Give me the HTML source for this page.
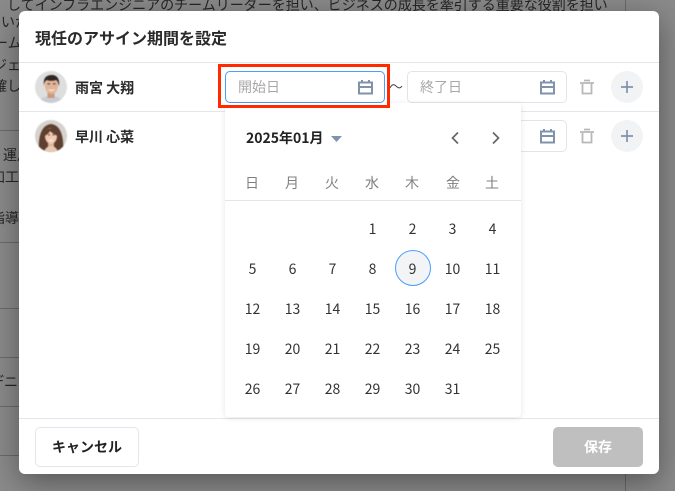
<!DOCTYPE html>
<html lang="ja"><head><meta charset="utf-8">
<style>
*{box-sizing:border-box;margin:0;padding:0}
html,body{width:675px;height:491px;overflow:hidden}
body{position:relative;background:#8a8a8a;font-family:"Noto Sans CJK JP","Liberation Sans",sans-serif;color:#222}
.a{position:absolute;white-space:nowrap;line-height:20px}
.bg{color:#262626;font-size:14px}
.ln{position:absolute;height:1px;background:#6a6a6a}
.modal{position:absolute;left:19px;top:11px;width:640px;height:463px;background:#fff;border-radius:6px;box-shadow:0 8px 30px rgba(0,0,0,.38)}
.h{position:absolute;left:19px;width:640px;height:1px;background:#e3e7ec}
.inp{position:absolute;width:160px;height:32px;background:#fff;border:1px solid #e1e5ea;border-radius:5px}
.ph{color:#a8a8a8;font-size:14px}
.nm{font-size:14px;font-weight:700;color:#2a2a2a}
.plus{position:absolute;left:611px;width:32px;height:32px;border-radius:50%;background:#f2f3f5}
.av{position:absolute;left:35px;width:32px;height:32px;filter:blur(.4px)}
.ic{position:absolute}
.pop{position:absolute;left:225px;top:103px;width:296px;height:314px;background:#fff;border-radius:0 0 4px 4px;box-shadow:0 1px 6px rgba(0,0,0,.1)}
.d{position:absolute;width:40px;text-align:center;font-size:14px;line-height:20px;color:#333}
.w{color:#808080}
</style></head><body>
<div class="a bg" style="left:7px;top:-5px">してインフラエンジニアのチームリーダーを担い、ビジネスの成長を牽引する重要な役割を担い</div>
<div class="a bg" style="left:1px;top:12px">いか</div>
<div class="a bg" style="left:-6px;top:33px">ーム</div>
<div class="a bg" style="left:-7px;top:55px">ジェ</div>
<div class="a bg" style="left:-7px;top:76px">確し</div>
<div class="a bg" style="left:3px;top:145px">運用</div>
<div class="a bg" style="left:-9px;top:167px">加工</div>
<div class="a bg" style="left:-9px;top:208px">指導</div>
<div class="a bg" style="left:-10px;top:372px">デニ</div>
<div class="ln" style="left:0;top:130px;width:19px"></div>
<div class="ln" style="left:0;top:242px;width:19px"></div>
<div class="ln" style="left:0;top:308px;width:19px"></div>
<div class="ln" style="left:0;top:357px;width:19px"></div>
<div class="ln" style="left:0;top:406px;width:19px"></div>
<div class="ln" style="left:0;top:455px;width:19px"></div>
<div style="position:absolute;left:625px;top:0;width:1px;height:491px;background:#6a6a6a"></div>

<div class="modal"></div>
<div class="a" style="left:35px;top:26px;font-size:16px;font-weight:700;line-height:22px;color:#2a2a2a">現任のアサイン期間を設定</div>
<div class="h" style="top:62px"></div>
<div class="h" style="top:111px"></div>
<div class="h" style="top:418px"></div>

<svg class="av" style="top:71px" viewBox="0 0 32 32"><defs><clipPath id="c1"><circle cx="16" cy="16" r="16"/></clipPath></defs><g clip-path="url(#c1)"><rect width="32" height="32" fill="#dedede"/><path d="M4 32c1-5 6-7 12-7s11 2 12 7z" fill="#c9ccd2"/><rect x="12.500" y="20" width="7" height="7" fill="#c99a80"/><ellipse cx="16.500" cy="14.500" rx="6.500" ry="8.500" fill="#e3b397"/><path d="M9 15C8 7 11 4 17 4c5 0 8 4 7 11-1-3-1-5-3-6-3 1-7 1-9 0-2 1-3 3-3 6z" fill="#2e2723"/><path d="M12.500 12.800h2.500M18 12.800h2.500" stroke="#2e2723" stroke-width=".9"/><path d="M12.500 18q4 2 8 0q-4 4-8 0z" fill="#fff"/></g></svg>
<svg class="av" style="top:120px" viewBox="0 0 32 32"><defs><clipPath id="c2"><circle cx="16" cy="16" r="16"/></clipPath></defs><g clip-path="url(#c2)"><rect width="32" height="32" fill="#d6d2ce"/><path d="M4 32C3 20 5 5 16 4c11 1 13 16 12 28z" fill="#5e4030"/><rect x="13" y="21" width="6" height="7" fill="#dcb098"/><path d="M9 32c1-4 4-6 7-6s6 2 7 6z" fill="#e8c8b4"/><ellipse cx="16" cy="16" rx="6" ry="8" fill="#f0c9b2"/><path d="M9 16c0-5 4-8 9-8 3 1 5 4 5 8-3-1-6-3-8-5-1 2-3 4-6 5z" fill="#5e4030"/><path d="M13 14.800h2M17.500 14.800h2" stroke="#3a2a22" stroke-width=".9"/><path d="M13 19.500q3 1.500 6 0q-3 3.500-6 0z" fill="#fff"/></g></svg>
<div class="a nm" style="left:75px;top:78px">雨宮 大翔</div>
<div class="a nm" style="left:75px;top:127px">早川 心菜</div>

<div class="inp" style="left:225px;top:71px;border-color:#4a9eff"></div>
<div class="a ph" style="left:238px;top:77px">開始日</div>
<svg class="ic" style="left:358px;top:79px" width="15" height="16" viewBox="0 0 15 16"><path d="M1 3.500h13v11H1zM1 8h13" fill="none" stroke="#7f93ad" stroke-width="2"/><path d="M4 1v3M11 1v3" stroke="#7f93ad" stroke-width="2"/></svg>
<svg class="ic" style="left:389px;top:83px" width="14" height="8" viewBox="0 0 14 8"><path d="M1 5C3 1 5 1 7 3s4 3 6 0" fill="none" stroke="#444" stroke-width="1"/></svg>
<div class="inp" style="left:407px;top:71px"></div>
<div class="a ph" style="left:420px;top:77px">終了日</div>
<svg class="ic" style="left:540px;top:79px" width="15" height="16" viewBox="0 0 15 16"><path d="M1 3.500h13v11H1zM1 8h13" fill="none" stroke="#7f93ad" stroke-width="2"/><path d="M4 1v3M11 1v3" stroke="#7f93ad" stroke-width="2"/></svg>
<svg class="ic" style="left:580px;top:79px" width="14" height="16" viewBox="0 0 14 16"><path d="M0 4h14M4 1.500h6M2.500 5v9.500h9V5" fill="none" stroke="#b8b8b8" stroke-width="1.800"/></svg>
<div class="plus" style="top:71px"></div>
<svg class="ic" style="left:620px;top:80px" width="14" height="14" viewBox="0 0 14 14"><path d="M7 1v12M1 7h12" stroke="#7f93ad" stroke-width="1.700"/></svg>

<div class="inp" style="left:407px;top:120px"></div>
<svg class="ic" style="left:540px;top:128px" width="15" height="16" viewBox="0 0 15 16"><path d="M1 3.500h13v11H1zM1 8h13" fill="none" stroke="#7f93ad" stroke-width="2"/><path d="M4 1v3M11 1v3" stroke="#7f93ad" stroke-width="2"/></svg>
<svg class="ic" style="left:580px;top:128px" width="14" height="16" viewBox="0 0 14 16"><path d="M0 4h14M4 1.500h6M2.500 5v9.500h9V5" fill="none" stroke="#b8b8b8" stroke-width="1.800"/></svg>
<div class="plus" style="top:120px"></div>
<svg class="ic" style="left:620px;top:129px" width="14" height="14" viewBox="0 0 14 14"><path d="M7 1v12M1 7h12" stroke="#7f93ad" stroke-width="1.700"/></svg>

<div class="pop"></div>
<div style="position:absolute;left:218px;top:64px;width:172px;height:44px;border:3px solid #ff2a00"></div>
<div class="a" style="left:246px;top:128px;font-size:14px;font-weight:700;color:#222">2025年01月</div>
<svg class="ic" style="left:331px;top:136px" width="11" height="6" viewBox="0 0 11 6"><path d="M0 0h11L5.500 6z" fill="#7f93ad"/></svg>
<svg class="ic" style="left:450px;top:131px" width="10" height="14" viewBox="0 0 10 14"><path d="M8 1.500 2.500 7 8 12.500" fill="none" stroke="#666" stroke-width="1.700"/></svg>
<svg class="ic" style="left:491px;top:131px" width="10" height="14" viewBox="0 0 10 14"><path d="M2 1.500 7.500 7 2 12.500" fill="none" stroke="#666" stroke-width="1.700"/></svg>
<div class="d w" style="left:232px;top:173px">日</div><div class="d w" style="left:272px;top:173px">月</div><div class="d w" style="left:312px;top:173px">火</div><div class="d w" style="left:352px;top:173px">水</div><div class="d w" style="left:392px;top:173px">木</div><div class="d w" style="left:433px;top:173px">金</div><div class="d w" style="left:472px;top:173px">土</div>
<div style="position:absolute;left:225px;top:200px;width:296px;height:1px;background:#e3e5e8"></div>
<div style="position:absolute;left:395px;top:250px;width:36px;height:36px;border-radius:50%;background:#f3f4f6;border:1px solid #4a9eff"></div>

<div class="d" style="left:352.500px;top:219px">1</div><div class="d" style="left:392.500px;top:219px">2</div><div class="d" style="left:432.500px;top:219px">3</div><div class="d" style="left:472.500px;top:219px">4</div>
<div class="d" style="left:232.500px;top:259px">5</div><div class="d" style="left:272.500px;top:259px">6</div><div class="d" style="left:312.500px;top:259px">7</div><div class="d" style="left:352.500px;top:259px">8</div><div class="d" style="left:392.500px;top:259px">9</div><div class="d" style="left:432.500px;top:259px">10</div><div class="d" style="left:472.500px;top:259px">11</div>
<div class="d" style="left:232.500px;top:299px">12</div><div class="d" style="left:272.500px;top:299px">13</div><div class="d" style="left:312.500px;top:299px">14</div><div class="d" style="left:352.500px;top:299px">15</div><div class="d" style="left:392.500px;top:299px">16</div><div class="d" style="left:432.500px;top:299px">17</div><div class="d" style="left:472.500px;top:299px">18</div>
<div class="d" style="left:232.500px;top:339px">19</div><div class="d" style="left:272.500px;top:339px">20</div><div class="d" style="left:312.500px;top:339px">21</div><div class="d" style="left:352.500px;top:339px">22</div><div class="d" style="left:392.500px;top:339px">23</div><div class="d" style="left:432.500px;top:339px">24</div><div class="d" style="left:472.500px;top:339px">25</div>
<div class="d" style="left:232.500px;top:379px">26</div><div class="d" style="left:272.500px;top:379px">27</div><div class="d" style="left:312.500px;top:379px">28</div><div class="d" style="left:352.500px;top:379px">29</div><div class="d" style="left:392.500px;top:379px">30</div><div class="d" style="left:432.500px;top:379px">31</div>

<div style="position:absolute;left:35px;top:427px;width:104px;height:40px;border:1px solid #e3e6ea;border-radius:5px;background:#fff;text-align:center;font-size:14px;font-weight:700;line-height:38px;color:#222">キャンセル</div>
<div style="position:absolute;left:553px;top:427px;width:90px;height:40px;border-radius:5px;background:#bfbfbf;text-align:center;font-size:14px;font-weight:700;line-height:40px;color:#fff">保存</div>
</body></html>
